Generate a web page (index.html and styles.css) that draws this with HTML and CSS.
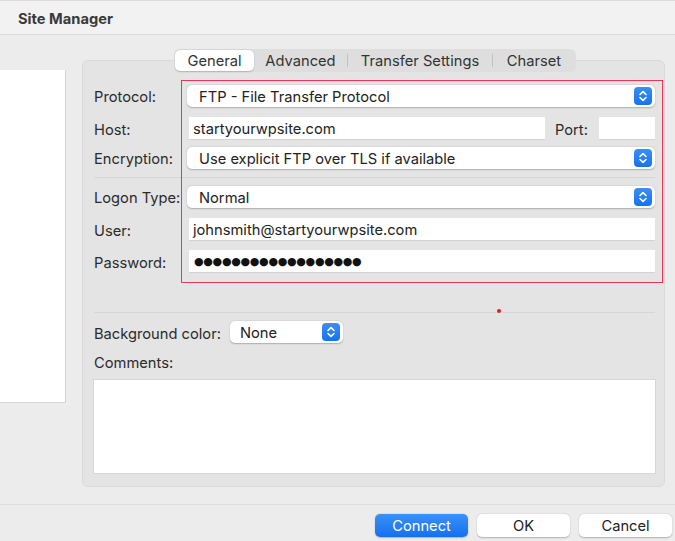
FILE: index.html
```html
<!DOCTYPE html>
<html>
<head>
<meta charset="utf-8">
<link rel="stylesheet" href="styles.css">
</head>
<body>
<div class="titlebar">Site Manager</div>
<div class="main">
  <div class="sitelist"></div>
  <div class="content">
    <div class="tabs">
      <div class="tab active t-general">General</div>
      <div class="tab t-adv">Advanced</div>
      <div class="sep"></div>
      <div class="tab t-transfer">Transfer Settings</div>
      <div class="sep"></div>
      <div class="tab t-charset">Charset</div>
    </div>
    <div class="panel">
      <div class="row r1">
        <span class="lbl">Protocol:</span>
        <div class="select wide"><span>FTP - File Transfer Protocol</span><span class="stepper"><svg width="18" height="18" viewBox="0 0 18 18"><path d="M6 7.5 L9 4.6 L12 7.5 M6 10.5 L9 13.4 L12 10.5" fill="none" stroke="#fff" stroke-width="1.6" stroke-linecap="round" stroke-linejoin="round"/></svg></span></div>
      </div>
      <div class="row r2">
        <span class="lbl">Host:</span>
        <div class="input host">startyourwpsite.com</div>
        <span class="portlbl">Port:</span>
        <div class="input port"></div>
      </div>
      <div class="row r3">
        <span class="lbl">Encryption:</span>
        <div class="select wide"><span>Use explicit FTP over TLS if available</span><span class="stepper"><svg width="18" height="18" viewBox="0 0 18 18"><path d="M6 7.5 L9 4.6 L12 7.5 M6 10.5 L9 13.4 L12 10.5" fill="none" stroke="#fff" stroke-width="1.6" stroke-linecap="round" stroke-linejoin="round"/></svg></span></div>
      </div>
      <div class="hr hr1"></div>
      <div class="row r4">
        <span class="lbl">Logon Type:</span>
        <div class="select wide"><span>Normal</span><span class="stepper"><svg width="18" height="18" viewBox="0 0 18 18"><path d="M6 7.5 L9 4.6 L12 7.5 M6 10.5 L9 13.4 L12 10.5" fill="none" stroke="#fff" stroke-width="1.6" stroke-linecap="round" stroke-linejoin="round"/></svg></span></div>
      </div>
      <div class="row r5">
        <span class="lbl">User:</span>
        <div class="input full">johnsmith@startyourwpsite.com</div>
      </div>
      <div class="row r6">
        <span class="lbl">Password:</span>
        <div class="input full dots">●●●●●●●●●●●●●●●●●●</div>
      </div>
      <div class="hr hr2"></div>
      <div class="row r7">
        <span class="bglbl">Background color:</span>
        <div class="select small"><span>None</span><span class="stepper"><svg width="18" height="18" viewBox="0 0 18 18"><path d="M6 7.5 L9 4.6 L12 7.5 M6 10.5 L9 13.4 L12 10.5" fill="none" stroke="#fff" stroke-width="1.6" stroke-linecap="round" stroke-linejoin="round"/></svg></span></div>
      </div>
      <div class="comments-lbl">Comments:</div>
      <div class="textarea"></div>
      <div class="highlight"></div>
      <div class="reddot"></div>
    </div>
  </div>
</div>
<div class="footer">
  <div class="btn primary">Connect</div>
  <div class="btn">OK</div>
  <div class="btn">Cancel</div>
</div>
</body>
</html>
```
FILE: styles.css
```css
* { box-sizing: border-box; }
html, body { margin: 0; padding: 0; }
body {
  width: 675px;
  height: 541px;
  overflow: hidden;
  background: #ececec;
  font-family: "Inter", "Liberation Sans", sans-serif;
  font-size: 14.7px;
  color: #2b2b2b;
}
.titlebar {
  height: 35px;
  padding: 2px 0 0 18px;
  line-height: 32px;
  font-weight: 700;
  font-size: 14.7px;
  color: #3a3a3a;
  background: #f2f2f2;
  border-top: 1px solid #dcdcdc;
  border-bottom: 1px solid #dadada;
}
.main {
  display: flex;
  height: 470px;
  border-bottom: 1px solid #dcdcdc;
}
.sitelist {
  width: 66px;
  height: 333px;
  margin-top: 35px;
  background: #fff;
  border-right: 1px solid #d6d6d6;
  border-bottom: 1px solid #d6d6d6;
}
.content {
  margin-left: 16px;
  width: 583px;
  margin-top: 14px;
}
.tabs {
  position: relative;
  z-index: 1;
  display: flex;
  align-items: center;
  margin-left: 92px;
  width: 402px;
  height: 23px;
  padding: 1px;
  margin-bottom: -12px;
  background: #dedede;
  border-radius: 6px;
}
.tab {
  height: 21px;
  line-height: 23px;
  text-align: center;
  color: #333;
}
.tab.active {
  background: #fff;
  border-radius: 5px;
  box-shadow: 0 0.5px 1.5px rgba(0,0,0,0.2);
}
.t-general { width: 79px; }
.t-adv { width: 93px; }
.t-transfer { width: 144px; }
.t-charset { width: 82px; }
.sep { width: 1px; height: 13px; background: #c2c2c2; }
.panel {
  position: relative;
  height: 427px;
  padding: 24px 9px 0 11px;
  background: #e4e4e4;
  border: 1px solid #dadada;
  border-radius: 6px;
}
.row { display: flex; align-items: center; }
.lbl { width: 93px; color: #2b2b2b; padding-top: 2px; }
.r1 { height: 22px; margin-bottom: 10px; }
.r2 { height: 23px; margin-bottom: 7px; }
.r3 { height: 22px; }
.r4 { height: 22px; margin-bottom: 10px; }
.r5 { height: 23px; margin-bottom: 9px; }
.r6 { height: 23px; }
.r7 { height: 22px; }
.hr { height: 1px; background: #d6d6d6; }
.hr1 { margin: 8px 0 8px; }
.hr2 { margin: 39px 0 8px; }
.select {
  display: flex;
  align-items: center;
  justify-content: space-between;
  height: 22px;
  padding: 0 3px 0 12px;
  background: #fff;
  border-radius: 5px;
  box-shadow: 0 0.5px 1.5px rgba(0,0,0,0.25);
  color: #222;
}
.select > span:first-child { padding-top: 1px; }
.select.wide { width: 468px; }
.select.small { width: 113px; padding-left: 10px; }
.stepper {
  display: block;
  width: 18px;
  height: 18px;
  border-radius: 4px;
  background: linear-gradient(#3a8ff7, #1672ee);
}
.stepper svg { display: block; }
.input {
  height: 23px;
  line-height: 24px;
  padding-left: 4px;
  background: #fff;
  border-bottom: 1px solid #d2d2d2;
  color: #222;
  margin-left: 2px;
}
.input.host { width: 356px; }
.portlbl { margin-left: 10px; width: 44px; padding-top: 2px; }
.input.port { width: 56px; margin-left: 0; }
.input.full { width: 466px; }
.input.dots {
  font-family: "DejaVu Sans", sans-serif;
  font-size: 11px;
  letter-spacing: -0.3px;
  padding-left: 5px;
  color: #111;
}
.bglbl { width: 136px; padding-top: 3px; }
.comments-lbl { margin-top: 13px; line-height: 14px; }
.textarea {
  margin-top: 9px;
  margin-left: -1px;
  width: 563px;
  height: 95px;
  background: #fff;
  border: 1px solid #d6d6d6;
}
.highlight {
  position: absolute;
  left: 98px;
  top: 19px;
  width: 482px;
  height: 203px;
  border: 1.5px solid #ec3550;
}
.reddot {
  position: absolute;
  left: 414px;
  top: 248px;
  width: 4px;
  height: 4px;
  border-radius: 50%;
  background: #e01c1c;
}
.footer {
  display: flex;
  justify-content: flex-end;
  gap: 9px;
  padding: 9px 3px 0 0;
}
.btn {
  width: 93px;
  height: 23px;
  line-height: 24px;
  text-align: center;
  background: #fff;
  border-radius: 5px;
  box-shadow: 0 0.5px 1.5px rgba(0,0,0,0.25);
  color: #222;
}
.btn.primary {
  background: linear-gradient(#3b91f7, #1570ee);
  color: #fff;
}
```
